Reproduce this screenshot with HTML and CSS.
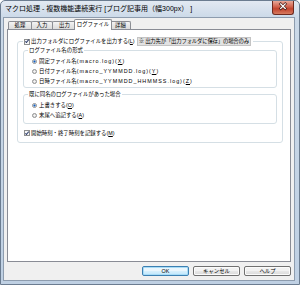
FILE: index.html
```html
<!DOCTYPE html>
<html lang="ja">
<head>
    <meta charset="UTF-8">
    <title>マクロ処理</title>
    <link rel="stylesheet" href="styles.css">
</head>
<body>
    <div class="window">
        <div class="titlebar">
            <span class="title">マクロ処理 - 複数機能連続実行 [ブログ記事用（幅300px） ]</span>
            <span class="close">
                <svg width="22" height="14" viewBox="0 0 22 14">
                    <path d="M8.5 2.5 L13.5 7.5 M13.5 2.5 L8.5 7.5" stroke="#4a2019" stroke-width="3" stroke-linecap="square"/>
                    <path d="M8.5 2.5 L13.5 7.5 M13.5 2.5 L8.5 7.5" stroke="#ffffff" stroke-width="1.4" stroke-linecap="square"/>
                </svg>
            </span>
        </div>
        <div class="client">
            <!-- tab strip -->
            <div class="tabs">
                <span class="tab t1">処理</span>
                <span class="tab t2">入力</span>
                <span class="tab t3">出力</span>
                <span class="tab t4 active">ログファイル</span>
                <span class="tab t5">詳細</span>
            </div>
            <div class="panel">
                <fieldset class="group outer">
                    <legend>
                        <span class="legend-row">
                            <span class="check"></span>
                            <span>出力フォルダにログファイルを出力する(<u>L</u>)</span>
                            <span class="note"><span class="jp">※</span> 出力先が「出力フォルダに保存」の場合のみ</span>
                        </span>
                    </legend>
                    <fieldset class="group inner first">
                        <legend>ログファイル名の形式</legend>
                        <div class="option"><span class="radio on"></span>固定ファイル名<span class="lat">(macro.log)(<u>X</u>)</span></div>
                        <div class="option"><span class="radio"></span>日付ファイル名<span class="lat">(macro_YYMMDD.log)(<u>Y</u>)</span></div>
                        <div class="option"><span class="radio"></span>日時ファイル名<span class="lat">(macro_YYMMDD_HHMMSS.log)(<u>Z</u>)</span></div>
                    </fieldset>
                    <fieldset class="group inner second">
                        <legend>既に同名のログファイルがあった場合</legend>
                        <div class="option"><span class="radio on"></span>上書きする(<u>O</u>)</div>
                        <div class="option"><span class="radio"></span>末尾へ追記する(<u>A</u>)</div>
                    </fieldset>
                    <div class="option check-row"><span class="check"></span>開始時刻・終了時刻を記録する(<u>M</u>)</div>
                </fieldset>
            </div>
            <div class="buttons">
                <button class="btn default">OK</button>
                <button class="btn">キャンセル</button>
                <button class="btn">ヘルプ</button>
            </div>
        </div>
    </div>
</body>
</html>
```

FILE: styles.css
```css
* {
    box-sizing: border-box;
}

body {
    margin: 0;
    font-family: 'Liberation Sans', 'Noto Sans CJK JP', sans-serif;
    font-size: 5.4px;
    color: #000;
    background-color: #ffffff;
}

.jp {
    font-family: 'Noto Sans CJK JP', sans-serif;
}

.lat {
    letter-spacing: 1px;
}

.window {
    width: 300px;
    height: 285px;
    display: flex;
    flex-direction: column;
    padding: 0 4px 3px 2px;
    border: 1px solid #6b7c90;
    border-radius: 5px 5px 0 0;
    background: linear-gradient(#e2e9f2, #cbd9e8 17px, #bfd0e3);
}

.titlebar {
    height: 16px;
    display: flex;
    justify-content: space-between;
    align-items: flex-start;
}

.title {
    font-size: 7px;
    line-height: 9px;
    padding: 3px 0 0 2px;
    white-space: nowrap;
}

.close {
    width: 22px;
    height: 14px;
    margin-right: 1px;
    border: 1px solid #6e2a1f;
    border-top: none;
    border-radius: 0 0 3px 3px;
    background: linear-gradient(#e9a898, #d0604b 45%, #c2432d 60%, #d67a5f);
    display: flex;
    justify-content: center;
}

.close svg {
    display: block;
}

.client {
    flex: 1;
    display: flex;
    flex-direction: column;
    padding: 0 3px;
    background-color: #f0f0f0;
    border: 1px solid #8d9cae;
}

/* Tabs */
.tabs {
    height: 11px;
    display: flex;
    align-items: flex-end;
    padding-left: 1px;
}

.tab {
    height: 8px;
    line-height: 7px;
    text-align: center;
    white-space: nowrap;
    border: 1px solid #8c8e94;
    border-bottom: none;
    border-radius: 2px 2px 0 0;
    margin-right: -1px;
    background: linear-gradient(#f4f4f4, #e6e6e6 50%, #dcdcdc);
}

.t1 { width: 24px; }
.t2 { width: 22px; }
.t3 { width: 25px; }
.t4 { width: 38px; }
.t5 { width: 21px; }

.tab.active {
    height: 11px;
    line-height: 9px;
    position: relative;
    z-index: 1;
    margin: 0 -2px -1px -2px;
    background: #ffffff;
}

.panel {
    flex: 1;
    padding: 7px 7px 0 9px;
    background-color: #ffffff;
    border: 1px solid #898c95;
}

/* Group boxes */
.group {
    margin: 0;
    min-width: 0;
    border: 1px solid #d5dfe5;
    border-radius: 3px;
}

.group legend {
    padding: 0 1px;
    line-height: 7px;
    white-space: nowrap;
}

.outer {
    padding: 0 5px 4px 5px;
}

.outer > legend {
    padding: 0 2px 0 1px;
}

.legend-row {
    height: 9px;
    display: flex;
    align-items: center;
}

.note {
    height: 9px;
    line-height: 7px;
    margin-left: 2px;
    padding: 0 1px;
    letter-spacing: -0.2px;
    background-color: #e2e2e2;
    border: 1px solid #c4c4c4;
}

.inner {
    padding: 2px 4px 1px 4px;
}

.inner.first {
    margin-top: 1px;
}

.inner.second {
    margin-top: 3px;
    padding-bottom: 3px;
}

.option {
    height: 10px;
    display: flex;
    align-items: center;
    padding-left: 4px;
    white-space: nowrap;
}

.check-row {
    margin-top: 4px;
    padding-left: 1px;
}

.radio {
    width: 5px;
    height: 5px;
    margin-right: 2px;
    border: 1px solid #8e8f8f;
    border-radius: 50%;
    background: radial-gradient(circle, #f4f4f4 0, #dcdcdc 100%);
    flex-shrink: 0;
}

.radio.on {
    background: radial-gradient(circle, #1d5fb4 0, #4f8ad6 0.9px, #e8eef6 1.4px);
}

.check {
    width: 6px;
    height: 6px;
    margin-right: 1px;
    border: 1px solid #8e8f8f;
    background-color: #f6f6f6;
    flex-shrink: 0;
    position: relative;
}

.check::after {
    content: '';
    position: absolute;
    left: 1.3px;
    top: -0.2px;
    width: 1.4px;
    height: 3px;
    border: solid #2c3c6c;
    border-width: 0 1px 1px 0;
    transform: rotate(40deg);
}

/* Dialog buttons */
.buttons {
    height: 18px;
    display: flex;
    justify-content: flex-end;
    gap: 4px;
    padding-top: 4px;
}

.btn {
    width: 47px;
    height: 10px;
    padding: 0;
    font: inherit;
    line-height: 8px;
    color: #000;
    border: 1px solid #707070;
    border-radius: 2px;
    background: linear-gradient(#f2f2f2 50%, #e8e8e8 50%, #dadada);
    box-shadow: inset 0 0 0 1px #fbfbfb;
}

.btn.default {
    border-color: #3c7fb1;
    background: linear-gradient(#eaf6fd 50%, #d9f0fc 50%, #bee6fd);
    box-shadow: inset 0 0 0 1px #a7dcf7;
}
```
